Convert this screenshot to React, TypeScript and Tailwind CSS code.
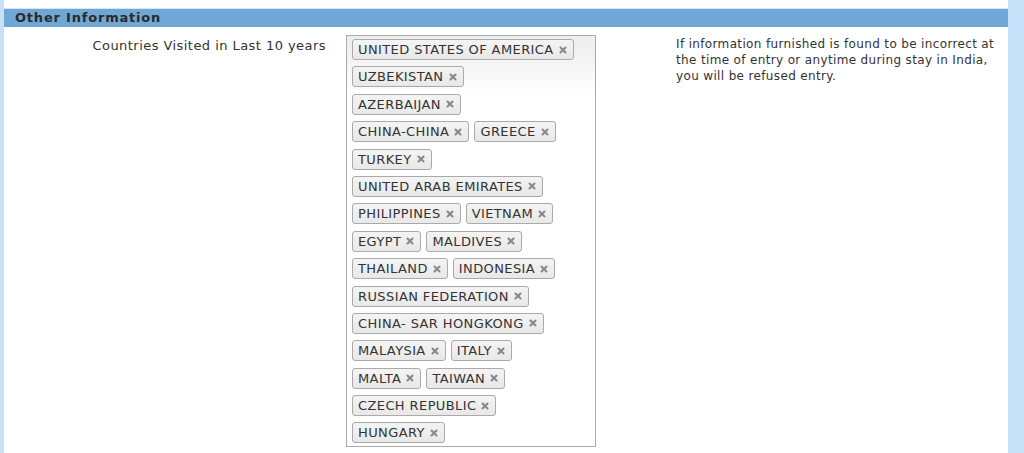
import { X } from 'lucide-react';

const rows: string[][] = [
  ['UNITED STATES OF AMERICA'],
  ['UZBEKISTAN'],
  ['AZERBAIJAN'],
  ['CHINA-CHINA', 'GREECE'],
  ['TURKEY'],
  ['UNITED ARAB EMIRATES'],
  ['PHILIPPINES', 'VIETNAM'],
  ['EGYPT', 'MALDIVES'],
  ['THAILAND', 'INDONESIA'],
  ['RUSSIAN FEDERATION'],
  ['CHINA- SAR HONGKONG'],
  ['MALAYSIA', 'ITALY'],
  ['MALTA', 'TAIWAN'],
  ['CZECH REPUBLIC'],
  ['HUNGARY'],
];

function Tag({ name }: { name: string }) {
  return (
    <span className="flex items-center h-[21px] pl-[5px] pr-[5px] border border-[#aaaaaa] rounded-[3px] bg-gradient-to-b from-[#f4f4f4] to-[#e8e8e8] text-[#333] text-[13px] tracking-[0.4px] leading-none">
      {name}
      <X className="w-[10px] h-[10px] ml-[4px] text-[#8a8a8a]" strokeWidth={5} />
    </span>
  );
}

export default function App() {
  return (
    <div className="w-[1024px] h-[453px] bg-[#c6e2fb] pl-[4px] pr-[16px] overflow-hidden font-['DejaVu_Sans',Verdana,sans-serif]">
      <div className="bg-white h-full">
        <div className="h-[9px] border-b border-[#d6e6f3]" />
        <div className="h-[18px] bg-[#6fa8d6] pl-[11px] flex items-center text-[13px] font-bold tracking-[0.8px] text-[#2a2a2a]">
          Other Information
        </div>
        <div className="flex pt-[8px]">
          <div className="w-[322px] text-right text-[13px] tracking-[0.45px] text-[#333] pt-[1px]">
            Countries Visited in Last 10 years
          </div>
          <div className="ml-[20px] w-[250px] h-[412px] border border-[#aaaaaa] bg-[linear-gradient(#eeeeee_1%,#ffffff_15%)] px-[5px] pt-[3px] flex flex-col gap-[6.4px]">
            {rows.map((row, i) => (
              <div key={i} className="flex gap-[5px]">
                {row.map((name) => (
                  <Tag key={name} name={name} />
                ))}
              </div>
            ))}
          </div>
          <div className="ml-[80px] w-[325px] text-[12px] leading-[16px] tracking-[0.35px] text-[#333] pt-[1px]">
            If information furnished is found to be incorrect at the time of entry or anytime during stay in India, you will be refused entry.
          </div>
        </div>
      </div>
    </div>
  );
}
